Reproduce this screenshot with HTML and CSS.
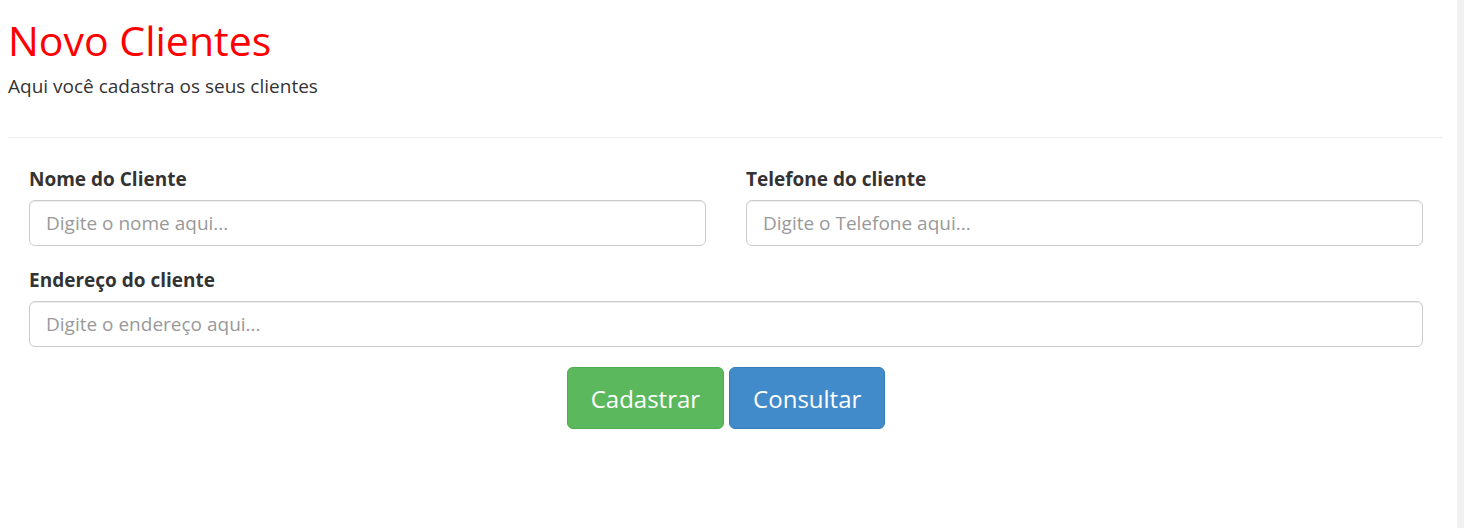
FILE: index.html
```html
<!DOCTYPE html>
<html lang="pt-BR">
<head>
<meta charset="utf-8">
<title>Novo Clientes</title>
<link rel="stylesheet" href="styles.css">
</head>
<body>
<div class="main">
  <header class="page-header">
    <h1 class="title">Novo Clientes</h1>
    <p class="subtitle">Aqui você cadastra os seus clientes</p>
  </header>
  <hr class="divider">
  <form class="form">
    <div class="row two">
      <div class="field">
        <label class="label" for="nome">Nome do Cliente</label>
        <input class="input" id="nome" type="text" placeholder="Digite o nome aqui...">
      </div>
      <div class="field">
        <label class="label" for="tel">Telefone do cliente</label>
        <input class="input" id="tel" type="text" placeholder="Digite o Telefone aqui...">
      </div>
    </div>
    <div class="row">
      <div class="field">
        <label class="label" for="end">Endereço do cliente</label>
        <input class="input" id="end" type="text" placeholder="Digite o endereço aqui...">
      </div>
    </div>
    <div class="actions">
      <button type="button" class="btn btn-green">Cadastrar</button>
      <button type="button" class="btn btn-blue">Consultar</button>
    </div>
  </form>
</div>
<div class="scrollbar"></div>
</body>
</html>
```
FILE: styles.css
```css
* { box-sizing: border-box; }
html, body { height: 100%; }
body {
  margin: 0;
  display: flex;
  font-family: "Open Sans", "Noto Sans", sans-serif;
  color: #333;
  background: #fff;
}
.main {
  flex: 1;
  padding: 0 14px 0 8px;
}
.scrollbar {
  width: 7px;
  background: #f1f1f1;
}
.page-header { padding-top: 13px; }
.title {
  margin: 0;
  font-size: 41px;
  font-weight: 400;
  line-height: 55px;
  color: #ff0000;
}
.subtitle {
  margin: 5px 0 0;
  font-size: 19px;
  line-height: 26px;
}
.divider {
  margin: 38px 0 0;
  border: 0;
  border-top: 1px solid #eee;
  height: 0;
}
.form {
  padding: 28px 20px 0 21px;
}
.row {
  display: grid;
  grid-template-columns: 1fr;
  margin-bottom: 21px;
}
.row.two {
  grid-template-columns: 1fr 1fr;
  column-gap: 40px;
}
.field {
  display: flex;
  flex-direction: column;
}
.label {
  font-size: 19px;
  font-weight: 700;
  line-height: 26px;
  margin-bottom: 8px;
}
.input {
  height: 46px;
  width: 100%;
  padding: 0 16px;
  font-family: inherit;
  font-size: 19px;
  color: #555;
  border: 1px solid #ccc;
  border-radius: 6px;
  box-shadow: inset 0 1px 1px rgba(0,0,0,0.075);
  outline: none;
}
.input::placeholder { color: #999; }
.actions {
  display: flex;
  justify-content: center;
  gap: 5px;
  margin-top: -1px;
}
.btn {
  height: 62px;
  padding: 0 23px;
  font-family: inherit;
  font-size: 24px;
  color: #fff;
  border-radius: 6px;
  border: 1px solid transparent;
  cursor: pointer;
}
.btn-green { background: #5cb85c; border-color: #4cae4c; }
.btn-blue { background: #428bca; border-color: #357ebd; }
```
